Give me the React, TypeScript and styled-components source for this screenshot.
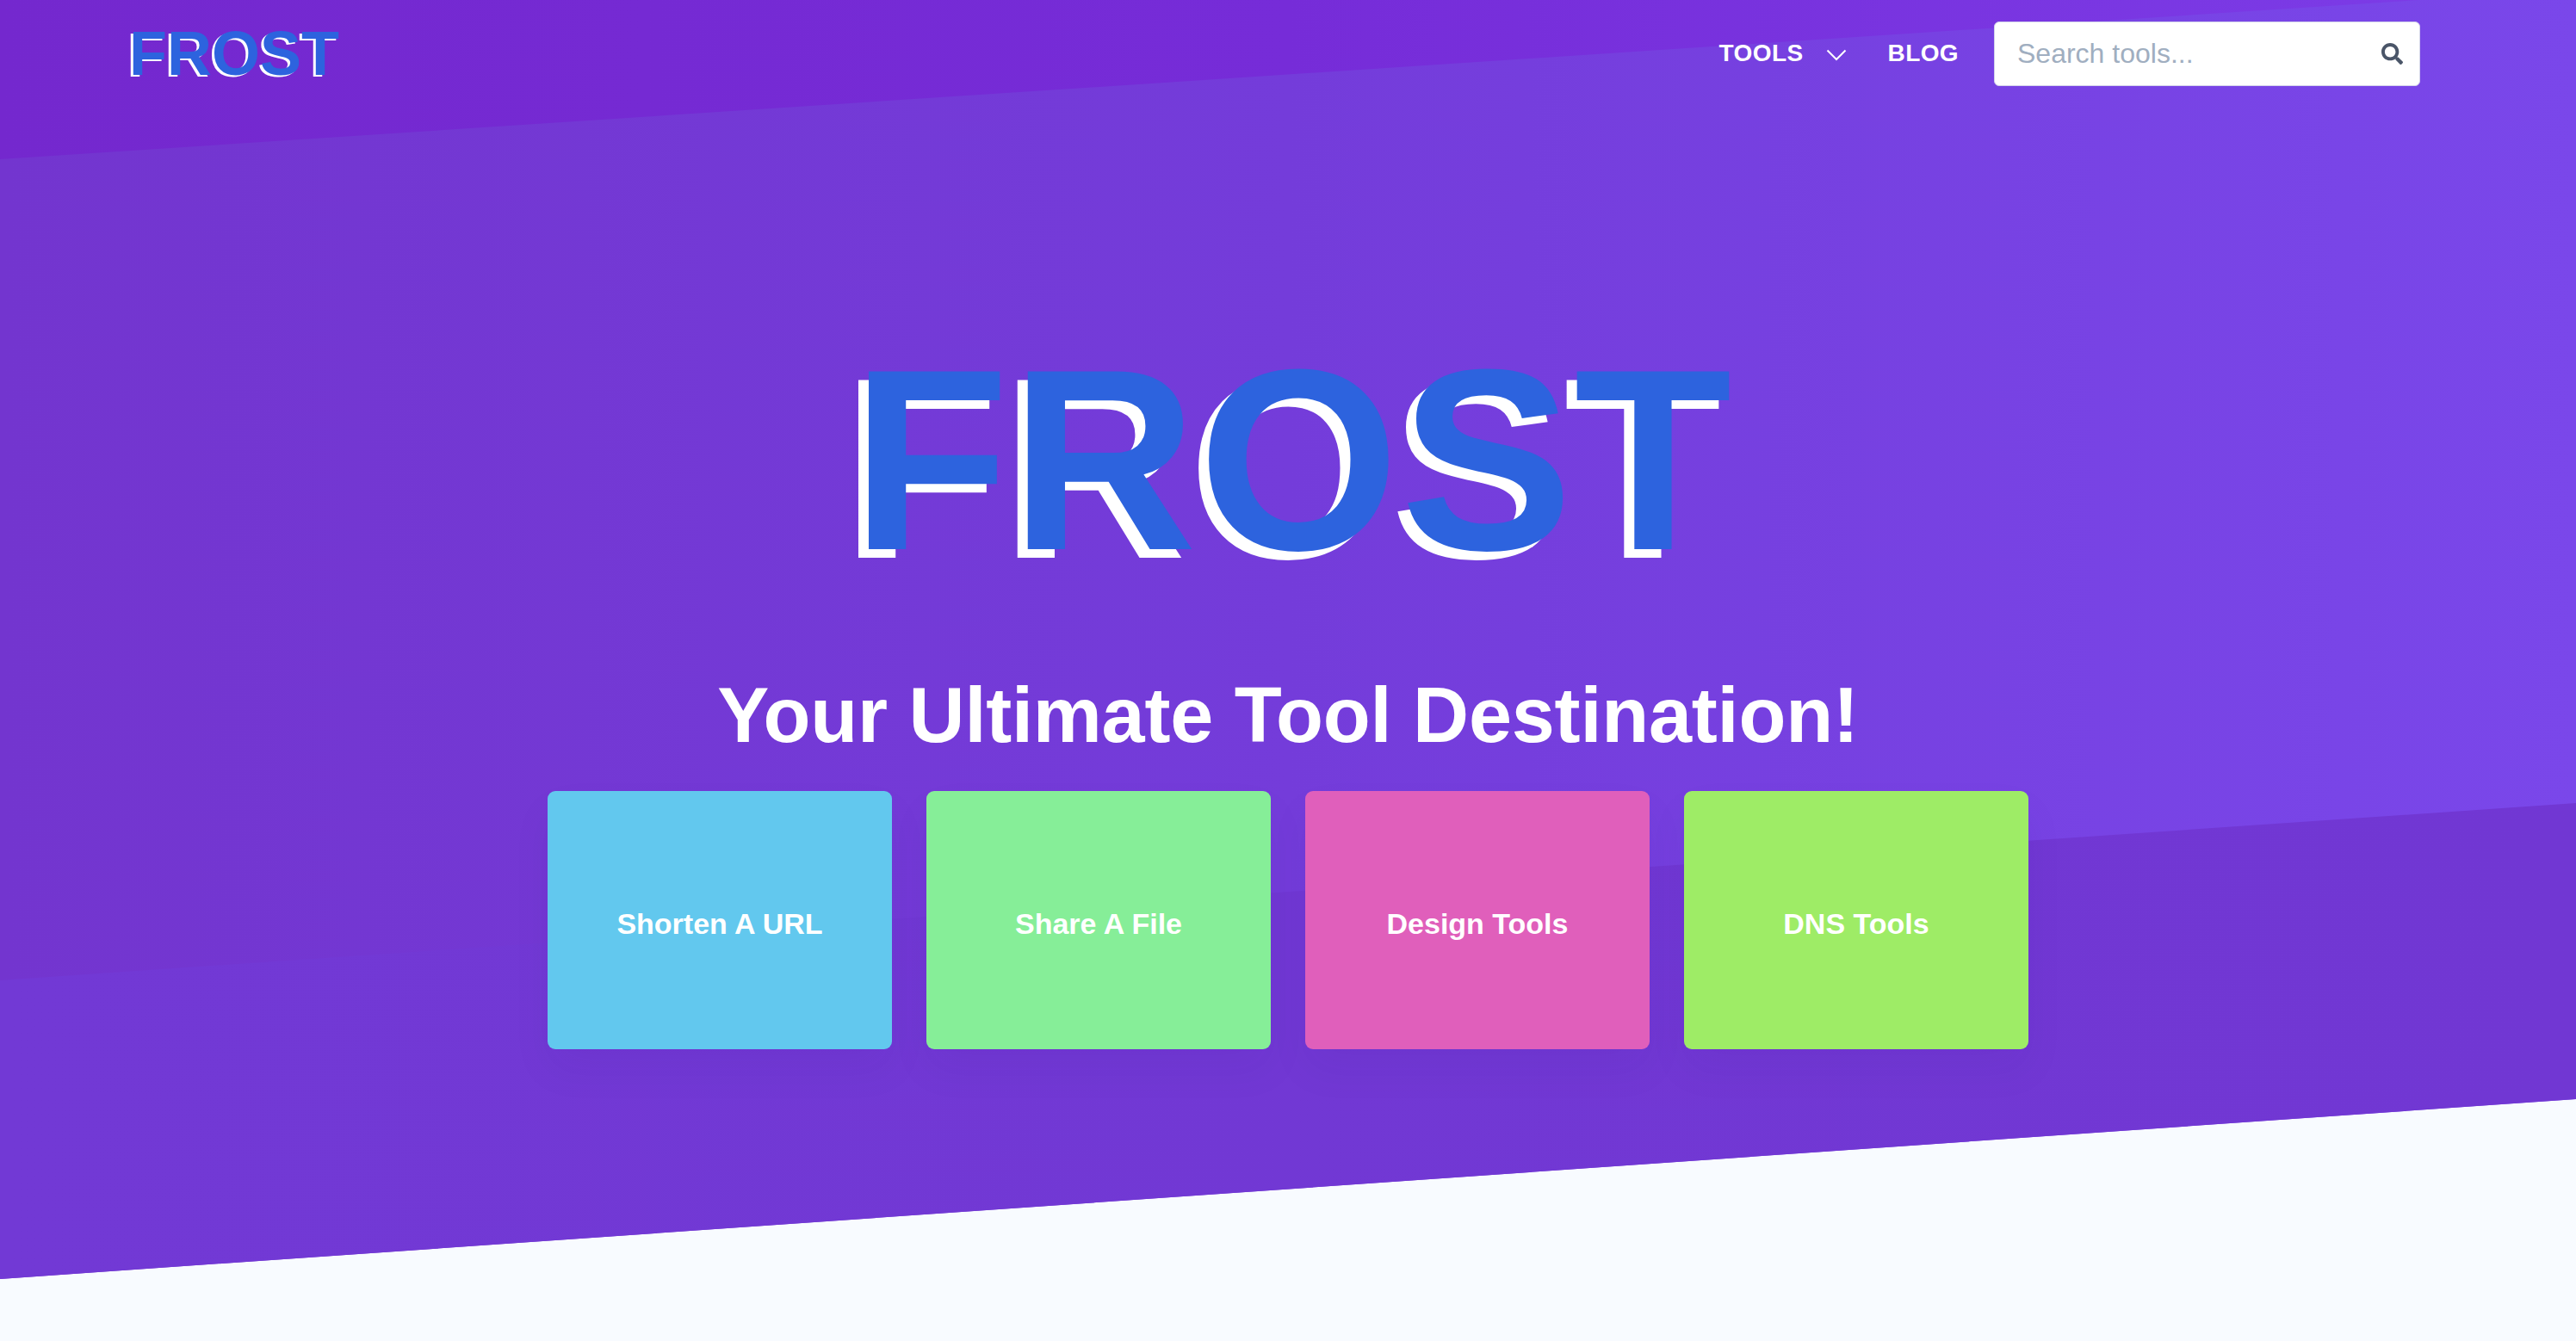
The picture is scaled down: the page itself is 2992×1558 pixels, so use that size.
import styled, { createGlobalStyle } from "styled-components";
import { FaSearch } from "react-icons/fa";

const GlobalStyle = createGlobalStyle`
    html, body {
        margin: 0;
        padding: 0;
        background: #f8fbff;
        font-family: "Liberation Sans", Arial, sans-serif;
    }
    * {
        box-sizing: border-box;
    }
`;

const Page = styled.div`
    height: 1558px;
    overflow: hidden;
`;

const Hero = styled.section`
    position: relative;
    height: 1486px;
    background: linear-gradient(90deg, #7335cf 0%, #743cda 50%, #7a47ea 100%);
    clip-path: polygon(0 0, 100% 0, 100% 1277px, 0 100%);

    /* top band */
    &::before {
        content: "";
        position: absolute;
        inset: 0;
        background: linear-gradient(90deg, #7428ce 0%, #762cd8 50%, #7c3de8 100%);
        clip-path: polygon(0 0, 100% 0, 100% -12px, 0 185px);
    }

    /* lower band */
    &::after {
        content: "";
        position: absolute;
        inset: 0;
        background: linear-gradient(90deg, #7239d5 0%, #7137d3 100%);
        clip-path: polygon(0 1139px, 100% 933px, 100% 100%, 0 100%);
    }
`;

const Content = styled.div`
    position: relative;
    z-index: 1;
`;

const Nav = styled.nav`
    display: flex;
    align-items: center;
    height: 124px;
    padding: 0 181px 0 150px;
`;

const Logo = styled.a`
    font-size: 72px;
    font-weight: 700;
    line-height: 1;
    margin-right: auto;
    color: #2d63de;
    text-shadow: -3px 2px 0 #fff;
`;

const NavLink = styled.a`
    display: flex;
    align-items: center;
    color: #fff;
    font-size: 28px;
    font-weight: 700;
    line-height: 1;
    letter-spacing: 0.4px;
`;

const Chevron = styled.svg`
    width: 24px;
    height: 14px;
    margin: 4px 48px 0 26px;
`;

const SearchBox = styled.div`
    display: flex;
    align-items: center;
    width: 495px;
    height: 75px;
    margin-left: 41px;
    padding: 0 19px 0 26px;
    background: #fff;
    border: 1px solid #d4d4ea;
    border-radius: 6px;
    color: #4a5568;
`;

const SearchInput = styled.input`
    flex: 1;
    min-width: 0;
    padding: 0;
    border: none;
    outline: none;
    background: none;
    font-family: inherit;
    font-size: 32px;

    &::placeholder {
        color: #a0aec0;
        opacity: 1;
    }
`;

const HeroBody = styled.div`
    display: flex;
    flex-direction: column;
    align-items: center;
`;

const Title = styled.h1`
    margin: 260px 0 0;
    padding-left: 10px;
    font-size: 300px;
    font-weight: 700;
    line-height: 1;
    letter-spacing: 1.5px;
    color: #2d63de;
    text-shadow: -12px 10px 0 #fff;
`;

const Subtitle = styled.h2`
    margin: 102px 0 0;
    font-size: 90px;
    font-weight: 700;
    line-height: 1;
    letter-spacing: -0.2px;
    color: #fff;
`;

const Cards = styled.div`
    display: flex;
    gap: 40px;
    margin-top: 43px;
`;

const Card = styled.a<{ $color: string }>`
    display: flex;
    align-items: center;
    justify-content: center;
    width: 400px;
    height: 300px;
    padding-top: 8px;
    background: ${(props) => props.$color};
    border-radius: 9px;
    box-shadow: 0 24px 48px rgba(40, 20, 110, 0.05);
    color: #fff;
    font-size: 34px;
    font-weight: 700;
`;

const tools = [
    { label: "Shorten A URL", color: "#62c8ee" },
    { label: "Share A File", color: "#86ee98" },
    { label: "Design Tools", color: "#e05fbb" },
    { label: "DNS Tools", color: "#9eec66" },
];

function App() {
    return (
        <Page>
            <GlobalStyle />
            <Hero>
                <Content>
                    <Nav>
                        <Logo>FROST</Logo>
                        <NavLink>
                            TOOLS
                            <Chevron viewBox="0 0 24 14">
                                <path d="M1.5 1.5 12 12 22.5 1.5" fill="none" stroke="#fff" strokeWidth="2" />
                            </Chevron>
                        </NavLink>
                        <NavLink>BLOG</NavLink>
                        <SearchBox>
                            <SearchInput placeholder="Search tools..." />
                            <FaSearch size={25} />
                        </SearchBox>
                    </Nav>
                    <HeroBody>
                        <Title>FROST</Title>
                        <Subtitle>Your Ultimate Tool Destination!</Subtitle>
                        <Cards>
                            {tools.map((tool) => (
                                <Card key={tool.label} $color={tool.color}>
                                    {tool.label}
                                </Card>
                            ))}
                        </Cards>
                    </HeroBody>
                </Content>
            </Hero>
        </Page>
    );
}

export default App;
